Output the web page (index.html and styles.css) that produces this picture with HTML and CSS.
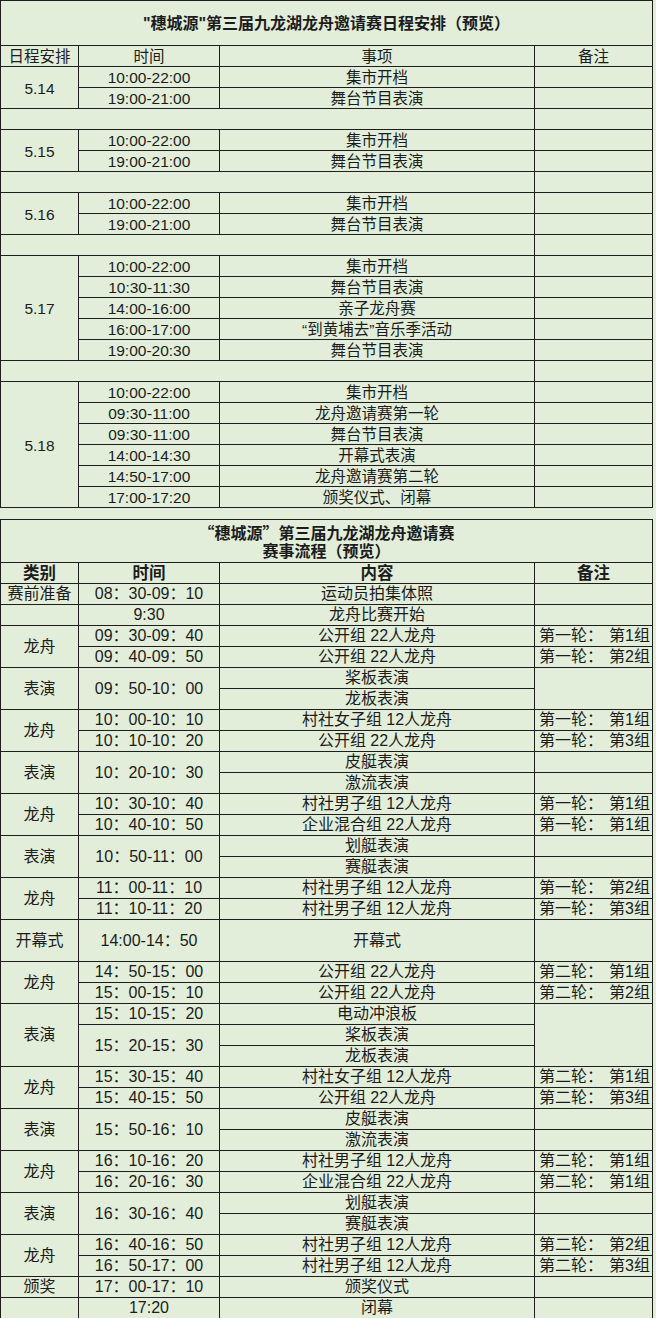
FILE: index.html
```html
<!DOCTYPE html>
<html lang="zh-CN">
<head>
<meta charset="utf-8">
<title>穗城源 第三届九龙湖龙舟邀请赛</title>
<link rel="stylesheet" href="styles.css">
</head>
<body>
<div class="page">
<table class="sheet sched">
  <colgroup><col class="c1"><col class="c2"><col class="c3"><col class="c4"></colgroup>
  <tr class="title-row"><td colspan="4" class="title">"穗城源"第三届九龙湖龙舟邀请赛日程安排（预览）</td></tr>
  <tr><td>日程安排</td><td>时间</td><td>事项</td><td>备注</td></tr>
  <tr><td rowspan="2">5.14</td><td>10:00-22:00</td><td>集市开档</td><td></td></tr>
  <tr><td>19:00-21:00</td><td>舞台节目表演</td><td></td></tr>
  <tr><td colspan="3"></td><td></td></tr>
  <tr><td rowspan="2">5.15</td><td>10:00-22:00</td><td>集市开档</td><td></td></tr>
  <tr><td>19:00-21:00</td><td>舞台节目表演</td><td></td></tr>
  <tr><td colspan="3"></td><td></td></tr>
  <tr><td rowspan="2">5.16</td><td>10:00-22:00</td><td>集市开档</td><td></td></tr>
  <tr><td>19:00-21:00</td><td>舞台节目表演</td><td></td></tr>
  <tr><td colspan="3"></td><td></td></tr>
  <tr><td rowspan="5">5.17</td><td>10:00-22:00</td><td>集市开档</td><td></td></tr>
  <tr><td>10:30-11:30</td><td>舞台节目表演</td><td></td></tr>
  <tr><td>14:00-16:00</td><td>亲子龙舟赛</td><td></td></tr>
  <tr><td>16:00-17:00</td><td>“到黄埔去”音乐季活动</td><td></td></tr>
  <tr><td>19:00-20:30</td><td>舞台节目表演</td><td></td></tr>
  <tr><td colspan="3"></td><td></td></tr>
  <tr><td rowspan="6">5.18</td><td>10:00-22:00</td><td>集市开档</td><td></td></tr>
  <tr><td>09:30-11:00</td><td>龙舟邀请赛第一轮</td><td></td></tr>
  <tr><td>09:30-11:00</td><td>舞台节目表演</td><td></td></tr>
  <tr><td>14:00-14:30</td><td>开幕式表演</td><td></td></tr>
  <tr><td>14:50-17:00</td><td>龙舟邀请赛第二轮</td><td></td></tr>
  <tr><td>17:00-17:20</td><td>颁奖仪式、闭幕</td><td></td></tr>
</table>

<table class="sheet flow">
  <colgroup><col class="c1"><col class="c2"><col class="c3"><col class="c4"></colgroup>
  <tr class="title-row2"><td colspan="4" class="title"><div class="tline"><span class="fw">“</span>穗城源<span class="fw">”</span>第三届九龙湖龙舟邀请赛</div><div class="tline">赛事流程（预览）</div></td></tr>
  <tr class="head"><td>类别</td><td>时间</td><td>内容</td><td>备注</td></tr>
  <tr><td>赛前准备</td><td>08：30-09：10</td><td>运动员拍集体照</td><td></td></tr>
  <tr><td></td><td>9:30</td><td>龙舟比赛开始</td><td></td></tr>
  <tr><td rowspan="2">龙舟</td><td>09：30-09：40</td><td>公开组 22人龙舟</td><td><div class="pair"><span>第一轮：</span><span>第1组</span></div></td></tr>
  <tr><td>09：40-09：50</td><td>公开组 22人龙舟</td><td><div class="pair"><span>第一轮：</span><span>第2组</span></div></td></tr>
  <tr><td rowspan="2">表演</td><td rowspan="2">09：50-10：00</td><td>桨板表演</td><td rowspan="2"></td></tr>
  <tr><td>龙板表演</td></tr>
  <tr><td rowspan="2">龙舟</td><td>10：00-10：10</td><td>村社女子组 12人龙舟</td><td><div class="pair"><span>第一轮：</span><span>第1组</span></div></td></tr>
  <tr><td>10：10-10：20</td><td>公开组 22人龙舟</td><td><div class="pair"><span>第一轮：</span><span>第3组</span></div></td></tr>
  <tr><td rowspan="2">表演</td><td rowspan="2">10：20-10：30</td><td>皮艇表演</td><td></td></tr>
  <tr><td>激流表演</td><td></td></tr>
  <tr><td rowspan="2">龙舟</td><td>10：30-10：40</td><td>村社男子组 12人龙舟</td><td><div class="pair"><span>第一轮：</span><span>第1组</span></div></td></tr>
  <tr><td>10：40-10：50</td><td>企业混合组 22人龙舟</td><td><div class="pair"><span>第一轮：</span><span>第1组</span></div></td></tr>
  <tr><td rowspan="2">表演</td><td rowspan="2">10：50-11：00</td><td>划艇表演</td><td></td></tr>
  <tr><td>赛艇表演</td><td></td></tr>
  <tr><td rowspan="2">龙舟</td><td>11：00-11：10</td><td>村社男子组 12人龙舟</td><td><div class="pair"><span>第一轮：</span><span>第2组</span></div></td></tr>
  <tr><td>11：10-11：20</td><td>村社男子组 12人龙舟</td><td><div class="pair"><span>第一轮：</span><span>第3组</span></div></td></tr>
  <tr class="tall"><td>开幕式</td><td>14:00-14：50</td><td>开幕式</td><td></td></tr>
  <tr><td rowspan="2">龙舟</td><td>14：50-15：00</td><td>公开组 22人龙舟</td><td><div class="pair"><span>第二轮：</span><span>第1组</span></div></td></tr>
  <tr><td>15：00-15：10</td><td>公开组 22人龙舟</td><td><div class="pair"><span>第二轮：</span><span>第2组</span></div></td></tr>
  <tr><td rowspan="3">表演</td><td>15：10-15：20</td><td>电动冲浪板</td><td rowspan="3"></td></tr>
  <tr><td rowspan="2">15：20-15：30</td><td>桨板表演</td></tr>
  <tr><td>龙板表演</td></tr>
  <tr><td rowspan="2">龙舟</td><td>15：30-15：40</td><td>村社女子组 12人龙舟</td><td><div class="pair"><span>第二轮：</span><span>第1组</span></div></td></tr>
  <tr><td>15：40-15：50</td><td>公开组 22人龙舟</td><td><div class="pair"><span>第二轮：</span><span>第3组</span></div></td></tr>
  <tr><td rowspan="2">表演</td><td rowspan="2">15：50-16：10</td><td>皮艇表演</td><td></td></tr>
  <tr><td>激流表演</td><td></td></tr>
  <tr><td rowspan="2">龙舟</td><td>16：10-16：20</td><td>村社男子组 12人龙舟</td><td><div class="pair"><span>第二轮：</span><span>第1组</span></div></td></tr>
  <tr><td>16：20-16：30</td><td>企业混合组 22人龙舟</td><td><div class="pair"><span>第二轮：</span><span>第1组</span></div></td></tr>
  <tr><td rowspan="2">表演</td><td rowspan="2">16：30-16：40</td><td>划艇表演</td><td></td></tr>
  <tr><td>赛艇表演</td><td></td></tr>
  <tr><td rowspan="2">龙舟</td><td>16：40-16：50</td><td>村社男子组 12人龙舟</td><td><div class="pair"><span>第二轮：</span><span>第2组</span></div></td></tr>
  <tr><td>16：50-17：00</td><td>村社男子组 12人龙舟</td><td><div class="pair"><span>第二轮：</span><span>第3组</span></div></td></tr>
  <tr><td>颁奖</td><td>17：00-17：10</td><td>颁奖仪式</td><td></td></tr>
  <tr><td></td><td>17:20</td><td>闭幕</td><td></td></tr>
</table>
</div>
</body>
</html>
```

FILE: styles.css
```css
html, body {
  margin: 0;
  padding: 0;
  background: #e2eeda;
}

.page {
  width: 656px;
  display: flex;
  flex-direction: column;
  gap: 11px;
}

.sheet {
  border-collapse: collapse;
  table-layout: fixed;
  width: 652px;
  color: #1c1c1c;
  font-family: "Liberation Sans", "Noto Sans CJK SC", sans-serif;
}

.sheet col.c1 { width: 78px; }
.sheet col.c2 { width: 141px; }
.sheet col.c3 { width: 315px; }
.sheet col.c4 { width: 118px; }

.sheet td {
  border: 1px solid #1e1e1e;
  padding: 0;
  text-align: center;
  vertical-align: middle;
  white-space: nowrap;
  line-height: 18px;
}

.sheet tr { height: 21px; }

.sched {
  font-size: 15.5px;
}

.sched td {
  padding-top: 2px;
}

.sched .title-row { height: 45px; }

.title {
  font-weight: bold;
  font-size: 16px;
}

.flow {
  font-size: 16px;
}

.fw {
  font-family: "Noto Sans CJK SC", sans-serif;
  line-height: 18px;
}

.flow .title-row2 { height: 43px; }

.flow .title-row2 .title {
  padding-top: 2px;
}

.tline {
  height: 19px;
  line-height: 19px;
}

.flow .head td {
  font-weight: bold;
  font-size: 16.5px;
}

.flow .tall { height: 42px; }

.pair {
  display: flex;
  justify-content: space-between;
  padding: 0 2px 0 4px;
}
```
